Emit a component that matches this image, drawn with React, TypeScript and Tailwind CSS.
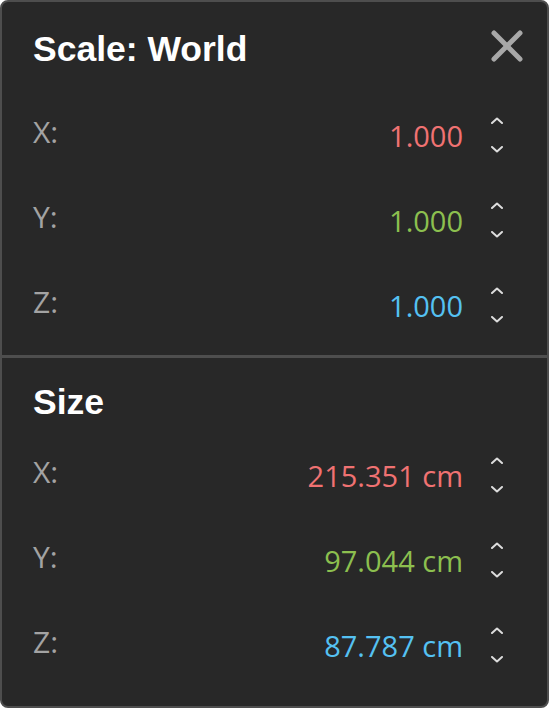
import React from "react";

type Axis = { label: string; value: string; color: string };

const scaleRows: Axis[] = [
  { label: "X:", value: "1.000", color: "text-[#f07272]" },
  { label: "Y:", value: "1.000", color: "text-[#8cbf4f]" },
  { label: "Z:", value: "1.000", color: "text-[#55c1f2]" },
];

const sizeRows: Axis[] = [
  { label: "X:", value: "215.351 cm", color: "text-[#f07272]" },
  { label: "Y:", value: "97.044 cm", color: "text-[#8cbf4f]" },
  { label: "Z:", value: "87.787 cm", color: "text-[#55c1f2]" },
];

function Stepper() {
  return (
    <div className="flex flex-col items-center gap-[22px] w-[14px]">
      <svg width="14" height="7" viewBox="0 0 14 7" fill="none">
        <polyline points="2,6 7,1.5 12,6" stroke="#dcdcdc" strokeWidth="2" strokeLinecap="round" strokeLinejoin="round" />
      </svg>
      <svg width="14" height="7" viewBox="0 0 14 7" fill="none">
        <polyline points="2,1 7,5.5 12,1" stroke="#dcdcdc" strokeWidth="2" strokeLinecap="round" strokeLinejoin="round" />
      </svg>
    </div>
  );
}

function Row({ label, value, color }: Axis) {
  return (
    <div className="flex items-center h-[85px] pr-[19px]">
      <span className="text-[#a3a3a3] text-[30px] mb-[6px]">{label}</span>
      <span className={`ml-auto mt-[2px] ${color}`}>{value}</span>
      <div className="ml-[27px]">
        <Stepper />
      </div>
    </div>
  );
}

export default function App() {
  return (
    <div className="w-[549px] h-[708px] bg-[#282828] border-2 border-[#4e4e4e] rounded-lg overflow-hidden flex flex-col">
      <div className="pl-[31px] pr-[24px] pt-[27px]">
        <div className="flex items-center justify-between h-[40px]">
          <h1 className="text-white font-bold text-[35.5px] leading-[40px] font-['Liberation_Sans',Arial,sans-serif]">
            Scale: World
          </h1>
          <svg width="32" height="32" viewBox="0 0 32 32" className="-mt-[6px]">
            <line x1="3" y1="3" x2="29" y2="29" stroke="#a8a8a8" strokeWidth="5" strokeLinecap="round" />
            <line x1="29" y1="3" x2="3" y2="29" stroke="#a8a8a8" strokeWidth="5" strokeLinecap="round" />
          </svg>
        </div>
        <div className="mt-[23px] text-[29px] leading-[40px] font-['Open_Sans','Noto_Sans',sans-serif]">
          {scaleRows.map((r) => (
            <Row key={r.label} {...r} />
          ))}
        </div>
      </div>

      <div className="mt-[8px] h-[3px] bg-[#4e4e4e]" />

      <div className="pl-[31px] pr-[24px] pt-[24px]">
        <h2 className="text-white font-bold text-[35.5px] leading-[40px] font-['Liberation_Sans',Arial,sans-serif]">
          Size
        </h2>
        <div className="mt-[10px] text-[29px] leading-[40px] font-['Open_Sans','Noto_Sans',sans-serif]">
          {sizeRows.map((r) => (
            <Row key={r.label} {...r} />
          ))}
        </div>
      </div>
    </div>
  );
}
